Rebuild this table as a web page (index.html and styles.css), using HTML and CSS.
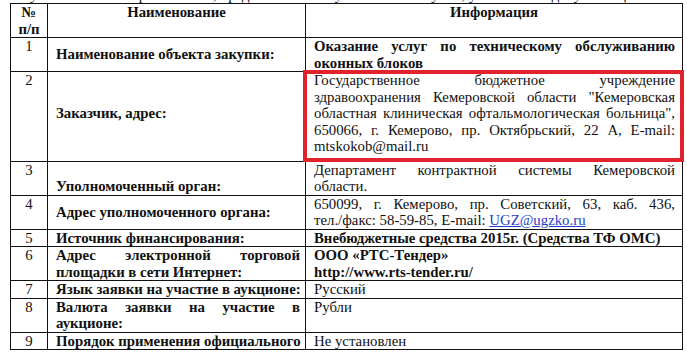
FILE: index.html
```html
<!DOCTYPE html>
<html lang="ru">
<head>
<meta charset="utf-8">
<title>Информационная карта</title>
<link rel="stylesheet" href="styles.css">
</head>
<body>
<div class="page">
  <div class="prev-line"><span>установленным требованиям, предъявляемым к участникам закупки, указанным в документации</span></div>
  <table class="info-table">
    <colgroup>
      <col class="c-num">
      <col class="c-name">
      <col class="c-info">
    </colgroup>
    <thead>
      <tr>
        <th class="num">№<br>п/п</th>
        <th class="head">Наименование</th>
        <th class="head">Информация</th>
      </tr>
    </thead>
    <tbody>
      <tr>
        <td class="num">1</td>
        <td class="label">Наименование объекта закупки:</td>
        <td class="info bold">
          <span class="jl">Оказание услуг по техническому обслуживанию</span>
          <span class="ll">оконных блоков</span>
        </td>
      </tr>
      <tr class="row-customer">
        <td class="num">2</td>
        <td class="label">Заказчик, адрес:</td>
        <td class="info marked">
          <span class="jl">Государственное бюджетное учреждение</span>
          <span class="jl">здравоохранения Кемеровской области "Кемеровская</span>
          <span class="jl">областная клиническая офтальмологическая больница",</span>
          <span class="jl">650066, г. Кемерово, пр. Октябрьский, 22 А, E-mail:</span>
          <span class="ll">mtskokob@mail.ru</span>
          <div class="highlight"></div>
        </td>
      </tr>
      <tr>
        <td class="num">3</td>
        <td class="label bottom">Уполномоченный орган:</td>
        <td class="info">
          <span class="jl">Департамент контрактной системы Кемеровской</span>
          <span class="ll">области.</span>
        </td>
      </tr>
      <tr>
        <td class="num">4</td>
        <td class="label">Адрес уполномоченного органа:</td>
        <td class="info">
          <span class="jl">650099, г. Кемерово, пр. Советский, 63, каб. 436,</span>
          <span class="ll">тел./факс: 58-59-85, E-mail: <a class="mail" href="#">UGZ@ugzko.ru</a></span>
        </td>
      </tr>
      <tr>
        <td class="num">5</td>
        <td class="label">Источник финансирования:</td>
        <td class="info bold">Внебюджетные средства 2015г. (Средства ТФ ОМС)</td>
      </tr>
      <tr>
        <td class="num">6</td>
        <td class="label">
          <span class="jl">Адрес электронной торговой</span>
          <span class="ll">площадки в сети Интернет:</span>
        </td>
        <td class="info bold">
          <span class="ll">ООО «РТС-Тендер»</span>
          <span class="ll">http://www.rts-tender.ru/</span>
        </td>
      </tr>
      <tr>
        <td class="num">7</td>
        <td class="label">Язык заявки на участие в аукционе:</td>
        <td class="info">Русский</td>
      </tr>
      <tr>
        <td class="num">8</td>
        <td class="label">
          <span class="jl">Валюта заявки на участие в</span>
          <span class="ll">аукционе:</span>
        </td>
        <td class="info">Рубли</td>
      </tr>
      <tr>
        <td class="num">9</td>
        <td class="label top">
          <span class="jl">Порядок применения официального</span>
        </td>
        <td class="info">Не установлен</td>
      </tr>
    </tbody>
  </table>
</div>
</body>
</html>
```

FILE: styles.css
```css
html, body {
  margin: 0;
  padding: 0;
  background: #ffffff;
}

body {
  font-family: "Liberation Serif", "Times New Roman", serif;
  font-size: 14.8px;
  line-height: 16.5px;
  color: #111111;
  overflow: hidden;
  height: 352px;
}

.page {
  padding-left: 10px;
  width: 672px;
}

.prev-line {
  height: 3px;
  overflow: hidden;
  white-space: nowrap;
  padding-left: 20px;
}

.prev-line span {
  display: block;
  margin-top: -13px;
}

.info-table {
  border-collapse: collapse;
  width: 672px;
  table-layout: fixed;
  font-family: "Liberation Serif", "Times New Roman", serif;
  font-size: 14.8px;
  line-height: 16.5px;
}

.c-num { width: 37px; }
.c-name { width: 258px; }
.c-info { width: 377px; }

.info-table th,
.info-table td {
  border: 1px solid #111111;
  padding: 0 6px 0 8px;
  vertical-align: top;
}

.info-table th {
  font-weight: bold;
  text-align: center;
}

.info-table th.head {
  padding: 0;
}

.info-table .num {
  text-align: center;
  padding: 0;
  font-weight: normal;
}

.info-table th.num {
  font-weight: bold;
}

.label {
  font-weight: bold;
  text-align: left;
  white-space: nowrap;
}

.info-table td.label {
  vertical-align: middle;
  padding-right: 5px;
}

.info-table td.label.bottom {
  vertical-align: bottom;
}

.info-table td.label.top {
  vertical-align: top;
}

.info-table td.info {
  padding-right: 7px;
  white-space: nowrap;
}

.bold {
  font-weight: bold;
}

.jl {
  display: block;
  text-align: justify;
  text-align-last: justify;
  white-space: nowrap;
}

.ll {
  display: block;
  text-align: left;
  white-space: nowrap;
}

.row-customer td {
  padding-bottom: 6px;
}

.info-table td.marked {
  position: relative;
}

.highlight {
  position: absolute;
  top: -2px;
  bottom: -1px;
  left: -3px;
  right: -2px;
  border: 4px solid #e3232b;
  pointer-events: none;
}

.mail {
  color: #1f3fc8;
  text-decoration: underline;
}
```
